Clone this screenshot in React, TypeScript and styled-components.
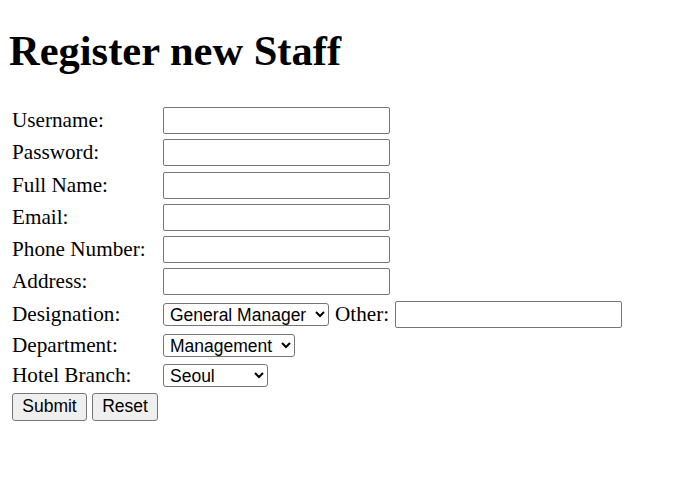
import styled, { createGlobalStyle } from "styled-components";

const GlobalStyle = createGlobalStyle`
  body {
    margin: 0;
    background: #ffffff;
    color: #000000;
    font-family: "Liberation Serif", "Times New Roman", serif;
  }
`;

const designations = ["General Manager", "Front Desk", "Housekeeping", "Chef"];
const departments = ["Management", "Reception", "Kitchen"];
const branches = ["Seoul", "Busan", "Jeju"];

const App = () => {
  return (
    <Page>
      <GlobalStyle />
      <Title>Register new Staff</Title>
      <Form onSubmit={(e) => e.preventDefault()}>
        <Label>Username:</Label>
        <TextInput type="text" />
        <Label>Password:</Label>
        <TextInput type="password" />
        <Label>Full Name:</Label>
        <TextInput type="text" />
        <Label>Email:</Label>
        <TextInput type="text" />
        <Label>Phone Number:</Label>
        <TextInput type="text" />
        <Label>Address:</Label>
        <TextInput type="text" />

        <Label>Designation:</Label>
        <InlineRow>
          <Select $width={166}>
            {designations.map((d) => (
              <option key={d}>{d}</option>
            ))}
          </Select>
          <Label>Other:</Label>
          <TextInput type="text" />
        </InlineRow>

        <Label>Department:</Label>
        <Select $width={132}>
          {departments.map((d) => (
            <option key={d}>{d}</option>
          ))}
        </Select>

        <Label>Hotel Branch:</Label>
        <Select $width={105}>
          {branches.map((b) => (
            <option key={b}>{b}</option>
          ))}
        </Select>

        <ButtonRow>
          <Button type="submit" $width={75}>
            Submit
          </Button>
          <Button type="reset" $width={66}>
            Reset
          </Button>
        </ButtonRow>
      </Form>
    </Page>
  );
};

// 전체 페이지
const Page = styled.div`
  padding: 0 8px 10px;
`;

const Title = styled.h1`
  margin: 0;
  padding: 28px 0 33px 1px;
  font-size: 42.5px;
  font-weight: bold;
  line-height: 46px;
`;

// 라벨 / 입력칸 두 줄 그리드
const Form = styled.form`
  display: grid;
  grid-template-columns: 151px auto;
  justify-content: start;
  align-items: center;
  row-gap: 5.3px;
  padding-left: 4px;
`;

const Label = styled.span`
  font-size: 21.2px;
  line-height: 25px;
  white-space: nowrap;
`;

const TextInput = styled.input`
  box-sizing: border-box;
  width: 227px;
  height: 27px;
  margin: 0;
  padding: 1px 4px;
  border: 1px solid #767676;
  border-radius: 2px;
  background: #ffffff;
  font-family: "Liberation Sans", Arial, sans-serif;
  font-size: 17px;
`;

const InlineRow = styled.div`
  display: flex;
  align-items: center;
  gap: 6px;
`;

const Select = styled.select<{ $width: number }>`
  box-sizing: border-box;
  width: ${(p) => p.$width}px;
  height: 23px;
  margin: 0;
  padding: 0 0 0 2px;
  border: 1px solid #767676;
  border-radius: 3px;
  background: #ffffff;
  color: #000000;
  font-family: "Liberation Sans", Arial, sans-serif;
  font-size: 17.5px;
`;

const ButtonRow = styled.div`
  grid-column: 1 / span 2;
  display: flex;
  gap: 5px;
  margin-top: -1px;
`;

const Button = styled.button<{ $width: number }>`
  box-sizing: border-box;
  width: ${(p) => p.$width}px;
  height: 28px;
  margin: 0;
  padding: 0;
  border: 1px solid #767676;
  border-radius: 3px;
  background: #efefef;
  color: #000000;
  font-family: "Liberation Sans", Arial, sans-serif;
  font-size: 17.5px;
`;

export default App;
